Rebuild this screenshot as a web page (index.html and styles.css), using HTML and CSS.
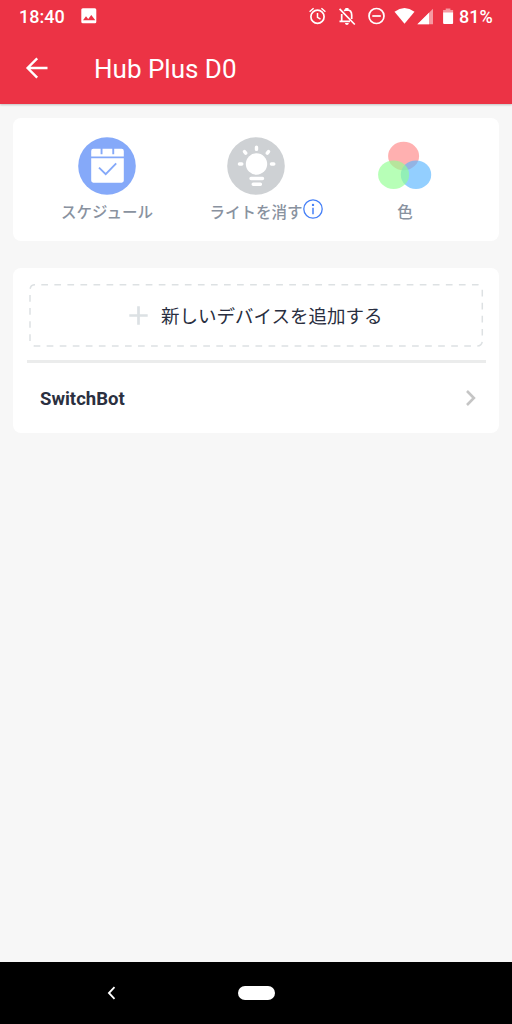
FILE: index.html
```html
<!DOCTYPE html>
<html lang="ja">
<head>
<meta charset="utf-8">
<title>Hub Plus D0</title>
<link rel="stylesheet" href="styles.css">
</head>
<body>
<div class="screen">
  <header class="header">
    <div class="status">
      <span class="clock">18:40</span>
      <svg class="picture" width="16" height="16" viewBox="0 0 16 16"><rect x=".3" y=".3" width="15" height="15" rx="1.5" fill="#fff"/><path d="M2 12.2 5 8.3l2.2 2.6 3.1-4 4 5.3z" fill="#ec3345"/></svg>
      <svg class="system" width="152" height="24" viewBox="0 0 152 24" fill="none" stroke="#fff" stroke-width="1.7">
        <circle cx="9.5" cy="11.8" r="6.6"/><path d="M9.5 8v4.3l3 1.8M1.6 6.7l4-3.4M17.4 6.7l-4-3.4" stroke-width="1.5"/>
        <path d="M31.6 3.9 46.8 19.5M33.7 9v7.3h-2.2M42 16.3h-10M36.1 5.8q1.1-.8 2.8-.9 4.8 0 4.8 5.2v4"/><path d="M37.3 2.9h3.2v2.8h-3.2zM36.9 18h4q-.4 2-2 2t-2-2z" fill="#fff" stroke="none"/>
        <circle cx="68.5" cy="11" r="7.5"/><path d="M64.3 11h8.5"/>
        <g stroke="none" fill="#fff"><path d="M86.5 6.7Q96.5-.7 106.5 6.7L96.5 18.8z"/><path d="M125 3.7v15.6h-15.6z" opacity=".5"/><path d="M121 7.7v11.6h-11.6z"/><path d="M137.7 3.5h4.7v1.6h2.7v3h-10v-3h2.6z" opacity=".5"/><path d="M135.1 7.5h10v10.6q0 1-1 1h-8q-1 0-1-1z"/></g>
      </svg>
      <span class="battery">81%</span>
    </div>
    <div class="toolbar">
      <svg class="back" width="24" height="24" viewBox="0 0 24 24" fill="none" stroke="#fff" stroke-width="2.4"><path d="M22.5 12H3M12.2 2.4 2.6 12l9.6 9.6"/></svg>
      <h1 class="title">Hub Plus D0</h1>
    </div>
  </header>
  <main class="content">
    <section class="card actions">
      <div class="action">
        <svg width="58" height="58" viewBox="0 0 58 58"><circle cx="29" cy="29" r="28.8" fill="#85a9f9"/><path d="M15.3 11.8h7.3v5.4h1.9v-5.4h9.8v5.4h1.9v-5.4h7.5q2.1 0 2.1 2.1v5.5H13.2v-5.5q0-2.1 2.1-2.1zM13.2 21.2h32.6v22.4q0 2.1-2.1 2.1H15.3q-2.1 0-2.1-2.1z" fill="#fff"/><path d="m21 30.6 6.7 6.6 10.5-10.8" fill="none" stroke="#85a9f9" stroke-width="1.9"/></svg>
        <span class="label">スケジュール</span>
      </div>
      <div class="action">
        <svg width="58" height="58" viewBox="0 0 58 58"><circle cx="29" cy="29" r="28.8" fill="#ced1d4"/><circle cx="29.5" cy="27" r="10.7" fill="#fff"/><g stroke="#fff" stroke-width="3.4" stroke-linecap="round"><path d="M29.5 10.2v2.2M17.5 14.6l1.2 1.5M41.5 14.6l-1.2 1.5M12.4 27h2.4M44.4 27h2.4M24 41.5h11.5M26.2 47.2h7.2"/></g></svg>
        <span class="label">ライトを消す<svg class="info" width="20" height="20" viewBox="0 0 20 20"><circle cx="10" cy="10" r="9.2" fill="none" stroke="#4680f7" stroke-width="1.3"/><circle cx="10" cy="5.9" r="1.2" fill="#4680f7"/><path d="M10 8.8v6.4" stroke="#4680f7" stroke-width="1.5"/></svg></span>
      </div>
      <div class="action">
        <svg width="58" height="58" viewBox="0 0 58 58"><ellipse cx="27.6" cy="19" rx="15.5" ry="14.3" fill="#ff8080" fill-opacity=".62"/><ellipse cx="40" cy="37.7" rx="15.2" ry="14.3" fill="#59b5ff" fill-opacity=".65"/><ellipse cx="17.6" cy="37.7" rx="15.5" ry="14.3" fill="#91ff91" fill-opacity=".66"/></svg>
        <span class="label">色</span>
      </div>
    </section>
    <section class="card devices">
      <div class="add">
        <svg class="outline" width="455" height="64"><rect x="1" y=".7" width="452.3" height="61.3" rx="5" fill="none" stroke="#dde1e3" stroke-width="1.5" stroke-dasharray="6.7 6.35" stroke-dashoffset="-6.3"/></svg>
        <svg class="plus" width="19" height="19" viewBox="0 0 19 19"><path d="M9.5.3v18.4M.3 9.5h18.4" stroke="#dce1e4" stroke-width="2.7"/></svg>
        <span class="add-label">新しいデバイスを追加する</span>
      </div>
      <div class="device">
        <span>SwitchBot</span>
        <svg class="chevron" width="12" height="18" viewBox="0 0 12 18"><path d="m2 2 6.9 7L2 16" fill="none" stroke="#c5c5c5" stroke-width="2.6"/></svg>
      </div>
    </section>
  </main>
  <nav class="navbar">
    <svg width="9" height="14" viewBox="0 0 9 14"><path d="M7.5 1.2 1.9 7l5.6 5.8" fill="none" stroke="#fff" stroke-width="1.8"/></svg>
    <span class="home"></span>
  </nav>
</div>
</body>
</html>
```
FILE: styles.css
```css
* { box-sizing: border-box; }
body { margin: 0; font-family: Roboto, "Noto Sans CJK JP", sans-serif; }
svg { display: block; flex: none; }
.screen { width: 512px; height: 1024px; display: flex; flex-direction: column; background: #f7f7f7; overflow: hidden; }
.header { height: 104px; flex: none; background: #ec3345; color: #fff; box-shadow: 0 1px 2px rgba(0,0,0,.22); }
.status { height: 33px; display: flex; align-items: center; padding: 0 19px; font-size: 18px; font-weight: 500; }
.clock { width: 46px; white-space: nowrap; }
.picture { margin-left: 16px; margin-top: -1px; }
.system { margin-left: 211px; }
.battery { margin-left: -1px; white-space: nowrap; }
.toolbar { height: 71px; display: flex; align-items: center; padding-left: 25px; }
.back { margin-top: -2px; }
.title { margin: 0 0 0 45px; font-size: 26px; line-height: 32px; font-weight: 400; white-space: nowrap; }
.content { flex: 1; padding: 14px 13px; }
.card { width: 486px; border-radius: 8px; background: #fff; }
.actions { height: 123px; padding: 18.5px 19px 0; display: grid; grid-template-columns: repeat(3, 149px); }
.action { display: flex; flex-direction: column; align-items: center; }
.label { position: relative; margin: 6px 0 0 1px; font-size: 15.5px; line-height: 24px; font-weight: 500; color: #89929f; white-space: nowrap; }
.info { position: absolute; left: 100%; top: -2px; }
.devices { height: 165px; margin-top: 27px; padding: 16px 13.5px 0; }
.add { position: relative; height: 63px; margin: 0 2.5px; display: flex; align-items: center; padding-left: 100px; font-size: 18.5px; color: #292e40; white-space: nowrap; }
.outline { position: absolute; left: 0; top: 0; }
.plus { margin-right: 13px; }
.add-label { padding-bottom: 2px; }
.device { height: 75px; margin: 13px 0 0; padding: 0 9px 0 13.5px; border-top: 3px solid #ebecec; display: flex; align-items: center; justify-content: space-between; font-size: 18.5px; font-weight: 700; color: #2b3040; }
.chevron { margin-top: -2px; }
.navbar { height: 62.5px; flex: none; display: flex; align-items: center; padding: 1px 0 0 107px; background: #000; }
.home { width: 37px; height: 14px; margin-left: 122px; border-radius: 7px; background: #fff; }
```
